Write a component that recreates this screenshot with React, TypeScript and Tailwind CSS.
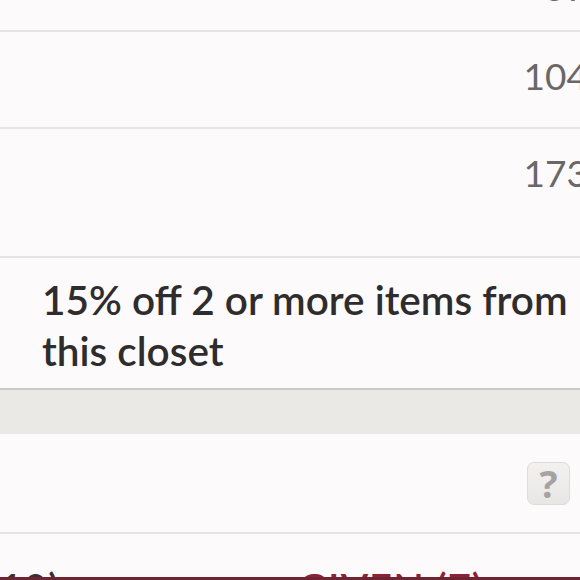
import React from 'react';

function NumberRow({ value, className }: { value: string; className: string }) {
  return (
    <div className={`flex justify-end pr-[12px] ${className}`}>
      <span className="text-[37px] leading-none text-[#6a6867]">{value}</span>
    </div>
  );
}

function Divider() {
  return <div className="h-[2px] bg-[#e8e4e3]" />;
}

export default function App() {
  return (
    <div className="relative h-[580px] w-[580px] overflow-hidden bg-[#fcfafa] font-['Lato','Liberation_Sans',sans-serif]">
      <div className="w-[600px]">
        <div className="relative h-[30px] overflow-hidden">
          <NumberRow value="57" className="-mt-[32px]" />
        </div>
        <Divider />
        <NumberRow value="104" className="h-[95px] pt-[25px]" />
        <Divider />
        <NumberRow value="173" className="h-[127px] pt-[25px]" />
        <Divider />

        <div className="h-[130px] pl-[42px] pt-[16px]">
          <p className="whitespace-nowrap text-[40.5px] font-semibold leading-[51px] text-[#2e2c2c]">
            15% off 2 or more items from
            <br />
            this closet
          </p>
        </div>

        <div className="h-[2px] bg-[#cbc9c6]" />
        <div className="h-[44px] bg-[#ebe9e5]" />

        <div className="flex h-[98px] w-[580px] items-center justify-end pr-[10px]">
          <div className="flex h-[43px] w-[43px] items-center justify-center rounded-[7px] border border-[#dedcd9] bg-gradient-to-b from-[#f3f1ef] to-[#e9e7e5] pb-[1px] font-['Open_Sans',sans-serif] text-[38px] font-bold leading-none text-[#a5a3a1]">
            ?
          </div>
        </div>
        <Divider />

        <div className="flex pt-[34px] text-[40px] font-semibold leading-none tracking-wide">
          <div className="flex w-[60px] justify-end whitespace-nowrap text-[#3a2e30]">
            RECEIVED (10)
          </div>
          <div className="ml-[238px] whitespace-nowrap text-[#8c2233]">GIVEN (7)</div>
        </div>
      </div>
      <div className="absolute left-0 top-[577px] h-[3px] w-full bg-[#6e2433]" />
    </div>
  );
}
